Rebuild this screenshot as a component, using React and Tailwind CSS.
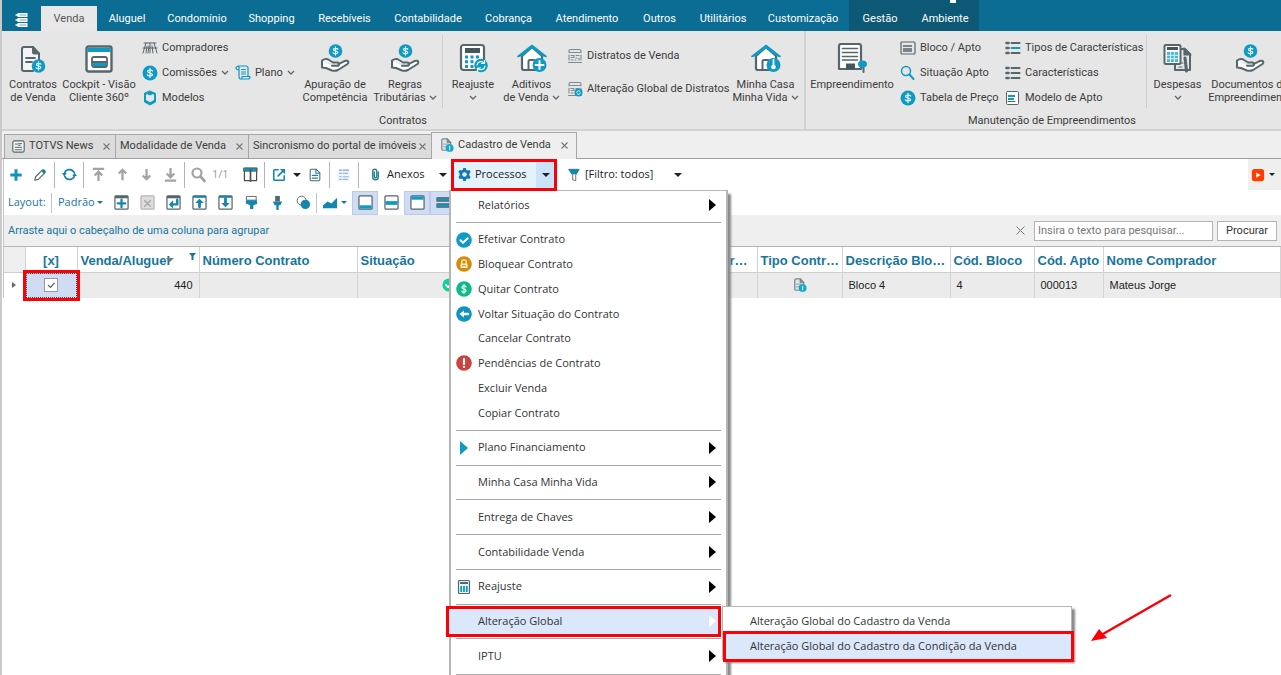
import { useState } from 'react'

const TEAL = '#0f9ac3'
const DARK = '#55666c'

function Svg({ size = 16, box = 16, children }) {
  return (
    <svg
      width={size}
      height={size}
      viewBox={`0 0 ${box} ${box}`}
      fill="none"
      strokeLinecap="round"
      strokeLinejoin="round"
      className="shrink-0"
      aria-hidden="true"
    >
      {children}
    </svg>
  )
}

// small "S" used inside every coin icon, drawn around a centre point
function Coin({ cx, cy, r }) {
  const k = r / 7
  return (
    <>
      <circle cx={cx} cy={cy} r={r} fill={TEAL} />
      <path
        transform={`translate(${cx} ${cy}) scale(${k})`}
        d="M2.4 -1.9C1.8 -2.9 -2.2 -3.2 -2.2 -1.3C-2.2 0.4 2.4 -0.4 2.4 1.5C2.4 3.2 -1.8 3.1 -2.5 1.8M0 -4.2V4.2"
        stroke="#e6f6fb"
        strokeWidth="1.2"
      />
    </>
  )
}

function ContractIcon() {
  return (
    <Svg size={28} box={28}>
      <path d="M20 15V8.500L14 2H5Q3 2 3 4v20q0 2 2 2H14" fill="#f4f4f4" stroke={DARK} strokeWidth="2" />
      <path d="M14 2v5q0 1.500 1.500 1.500H20" fill={DARK} stroke={DARK} strokeWidth="2" />
      <path d="M7 13h9M7 17h6" stroke={DARK} strokeWidth="1.800" />
      <Coin cx={19.5} cy={21} r={6.8} />
    </Svg>
  )
}

function CockpitIcon() {
  return (
    <Svg size={28} box={28}>
      <rect x="1.500" y="1.500" width="25" height="25" rx="2" fill="#fff" stroke={DARK} strokeWidth="2.400" />
      <path d="M2.500 3h23v4h-23z" fill={TEAL} />
      <rect x="7" y="12" width="15" height="10" rx="2" fill="#fff" stroke={DARK} strokeWidth="1.800" />
      <path d="M8 18h13v3H8z" fill={TEAL} />
      <path d="M7 17h15" stroke={DARK} strokeWidth="1.800" />
    </Svg>
  )
}

function HandCoinIcon() {
  return (
    <Svg size={30} box={30}>
      <Coin cx={15.5} cy={8} r={6.8} />
      <path
        d="M2 17.500v7l4 .5 6 2.500q3 .8 6-.5l9.500-6q2-2.300-.5-3.200-1.800-.3-4 1l-4.500 2.400M2 17.500q4-2.500 7-.5l4 2.500h4.500q2.500 1 1 3.200H12"
        fill="#fff"
        stroke={DARK}
        strokeWidth="2"
      />
    </Svg>
  )
}

function CalculatorIcon() {
  return (
    <Svg size={30} box={30}>
      <rect x="3" y="2" width="23" height="25" rx="2.500" fill="#fff" stroke={DARK} strokeWidth="2.200" />
      <rect x="7" y="5" width="15" height="5" fill="#45565c" />
      <path
        d="M7 12.500h3v3H7zM12.500 12.500h3v3h-3zM18 12.500h3v3h-3zM7 17.200h3v3H7zM12.500 17.200h3v3h-3zM7 22h3v3H7zM12.500 22h3v3h-3z"
        fill={TEAL}
      />
      <circle cx="23" cy="22.500" r="6.800" fill={TEAL} />
      <path d="M19 22a4 4 0 0 1 7-2M27 23a4 4 0 0 1-7 2.300M26.500 17.500V20.500h-3M19.500 28v-3h3" stroke="#fff" strokeWidth="1.200" />
    </Svg>
  )
}

function HouseIcon({ badge }) {
  return (
    <Svg size={30} box={30}>
      <path d="M5 13v12q0 2 2 2h18V13L15 4z" fill="#fff" stroke={DARK} strokeWidth="2.200" />
      <path d="M11.500 27v-8.500q0-1.500 1.500-1.500h4q1.500 0 1.500 1.500V27" stroke={DARK} strokeWidth="2" />
      <path d="M1 13.500L15 2.500l14 11-3-1-11-8-11 8z" fill={TEAL} stroke={TEAL} strokeWidth="1.600" />
      <circle cx="22.500" cy="22" r="7" fill={TEAL} />
      {badge === 'plus' && <path d="M22.500 18v8M18.500 22h8" stroke="#fff" strokeWidth="2" />}
      {badge === 'key' && (
        <>
          <circle cx="22.500" cy="24" r="2.300" fill="#fff" />
          <path d="M22.500 22v-5" stroke="#fff" strokeWidth="1.800" />
        </>
      )}
    </Svg>
  )
}

function BuildingIcon() {
  return (
    <Svg size={30} box={30}>
      <path d="M2 26V3q0-2 2-2h18q2 0 2 2v23z" fill="#fff" stroke={DARK} strokeWidth="2.200" />
      <path d="M5.500 5.500h15M5.500 9.500h15M5.500 13.500h15M5.500 17h15" stroke={DARK} strokeWidth="1.600" />
      <path d="M9 20.500h9v6H9z" fill="#45565c" />
      <path d="M26.500 23v6" stroke={DARK} strokeWidth="2" />
      <ellipse cx="25.500" cy="21" rx="4.500" ry="3.500" fill={TEAL} />
    </Svg>
  )
}

function ExpensesIcon() {
  return (
    <Svg size={30} box={30}>
      <path d="M12 6h10l5 5v16H12z" fill="#e6e6e6" stroke={DARK} strokeWidth="2" />
      <path d="M21 5v7h7zM16 20h4M16 24h3" fill={DARK} stroke={DARK} strokeWidth="1.200" />
      <path d="M22 15l1.500 13" stroke={DARK} strokeWidth="3" />
      <rect x="1.500" y="2" width="16" height="19" rx="1.500" fill="#fff" stroke={DARK} strokeWidth="2" />
      <path d="M4 4h11v3H4z" fill="#45565c" />
      <path d="M4 9h11v10H4z" fill="#4fb6d3" />
      <path d="M4 12.300h11M4 15.700h11M7.500 9v10M11.300 9v10" stroke="#d6f0f7" strokeWidth="1" />
    </Svg>
  )
}

function PeopleIcon() {
  return (
    <Svg>
      <path d="M2 3h12M4 3L1 13M5 6l-1 7M8 3v10M7 6L6 13M12 3l3 10M10 6l1 7M1 8h14" stroke={DARK} strokeWidth="1" />
    </Svg>
  )
}

function CoinIcon() {
  return (
    <Svg>
      <Coin cx={8} cy={8} r={7.5} />
    </Svg>
  )
}

function BoxIcon() {
  return (
    <Svg>
      <path d="M8 1l5.500 2.500v8.500L8 15l-5.500-3V3.500z" fill={TEAL} stroke={TEAL} />
      <path d="M5 4l3 1.500L11 4l1 1v5L8 12.200 4 10V5z" fill="#e6e6e6" />
    </Svg>
  )
}

function ScrollIcon() {
  return (
    <Svg>
      <path d="M4 5V2.500q0-1-1-1.500h8q2 0 2 2v8M1 2.500Q1 5 4 5V2.500Q3 .5 1 2.500zM4 5v6.500q0 2.500 2 2.500h7q2 0 2-2.500H7q0 2.500-1 2.500" stroke={TEAL} strokeWidth="1.200" />
      <path d="M6.500 4.500h4M6.500 7h4M6.500 9h4" stroke={TEAL} />
    </Svg>
  )
}

function DissolutionIcon({ badge }) {
  return (
    <Svg>
      <path d="M2 4.500V3q0-1.500 1.500-1.500h9Q14 1.500 14 3v1.500M2 7v5M14 7v5M1.500 14.500h13M2 4.500h2M12 4.500h2M5 4.500h6M4 7.500h3v2H4M9 7.500h3M9 10h1M12 10v2M4 12h2M8 12h1" stroke="#7d8a8f" strokeWidth="1.100" />
      {badge && (
        <>
          <circle cx="11.500" cy="11.500" r="4" fill={TEAL} />
          <path d="M9.800 11.500a1.800 1.800 0 0 1 3.200-1M13.300 11.800a1.800 1.800 0 0 1-3.200 1" stroke="#fff" strokeWidth=".8" />
        </>
      )}
    </Svg>
  )
}

function BlockIcon() {
  return (
    <Svg>
      <rect x="1" y="2" width="14" height="12" rx="1" stroke={DARK} strokeWidth="1.200" />
      <path d="M3 6h9M3 9h9M3 11h9" stroke={DARK} strokeWidth="1.500" strokeLinecap="butt" />
    </Svg>
  )
}

function SearchIcon({ color = TEAL, weight = 1.5 }) {
  return (
    <Svg>
      <circle cx="6" cy="6" r="4.500" stroke={color} strokeWidth={weight} />
      <path d="M9.500 9.500l4 4.500" stroke={color} strokeWidth={weight + 0.5} />
    </Svg>
  )
}

function ListIcon({ color = DARK }) {
  return (
    <Svg>
      <path d="M1.500 3h2M1.500 8h2M1.500 13h2" stroke={DARK} strokeWidth="2.600" />
      <path d="M6.500 3h8M6.500 13h8" stroke={DARK} strokeWidth="2" />
      <path d="M6.500 8h8" stroke={color} strokeWidth="2" />
    </Svg>
  )
}

function ModelIcon() {
  return (
    <Svg>
      <rect x="1.500" y="1.500" width="12" height="13" rx="1" fill="#fff" stroke={DARK} strokeWidth="1" />
      <path d="M3 6h7M3 9h6" stroke={TEAL} strokeWidth="1.800" strokeLinecap="butt" />
      <path d="M3 11.500h7" stroke={DARK} />
    </Svg>
  )
}

function ContractSmallIcon() {
  return (
    <Svg size={14}>
      <path d="M12 7V5L8.500 1H3.500Q2 1 2 2.500v10Q2 14 3.500 14H8" fill="#dfe3e4" stroke="#7b898e" strokeWidth="1.400" />
      <path d="M8 1v4.500H12.500zM4 7h4M4 10h3" fill="#7b898e" stroke="#7b898e" strokeWidth=".8" />
      <circle cx="11" cy="11.300" r="4.500" fill="#16a9cc" />
      <path d="M11 9.500v4" stroke="#d8f2f9" strokeWidth="1.200" />
    </Svg>
  )
}

function Chevron() {
  return (
    <svg width="8" height="6" viewBox="0 0 8 6" fill="none" className="shrink-0" aria-hidden="true">
      <path d="M1 1l3 3 3-3" stroke="#666" strokeWidth="1.300" />
    </svg>
  )
}

function Caret({ small, color = '#222' }) {
  return (
    <svg width={small ? 6 : 8} height={small ? 3 : 4} viewBox="0 0 8 4" className="shrink-0" aria-hidden="true">
      <path d="M0 0h8L4 4z" fill={color} />
    </svg>
  )
}

function BigButton({ icon, lines, width, arrow }) {
  return (
    <button className={`flex shrink-0 flex-col items-center whitespace-nowrap ${width}`}>
      <span className="flex h-[47px] items-end pb-[5px]">{icon}</span>
      <span className="leading-[13px]">{lines[0]}</span>
      <span className="flex h-[13px] items-center gap-[3px] leading-[13px]">
        {lines[1]}
        {arrow && <Chevron />}
      </span>
    </button>
  )
}

function SmallButton({ icon, label, arrow }) {
  return (
    <button className="flex h-4 items-center gap-1 whitespace-nowrap">
      {icon}
      {label}
      {arrow && <Chevron />}
    </button>
  )
}

function RibbonDivider() {
  return <div className="mt-1 h-[73px] w-px shrink-0 bg-[#cdcdcd]" />
}

function Ribbon() {
  return (
    <div className="flex h-[100px] overflow-hidden border-b-2 border-[#d2d2d2] bg-[#e6e6e6] text-[11px] text-[#3c3c3c]">
      <section className="flex w-[804px] shrink-0 flex-col border-r-2 border-[#d2d2d2]">
        <div className="flex h-[84px] pl-[3px]">
          <BigButton icon={<ContractIcon />} lines={['Contratos', 'de Venda']} width="w-[56px]" />
          <BigButton icon={<CockpitIcon />} lines={['Cockpit - Visão', 'Cliente 360º']} width="w-[76px]" />
          <div className="flex w-[165px] shrink-0 flex-col gap-[9px] pt-[9px] pl-[5px]">
            <SmallButton icon={<PeopleIcon />} label="Compradores" />
            <div className="flex gap-[6px]">
              <SmallButton icon={<CoinIcon />} label="Comissões" arrow />
              <SmallButton icon={<ScrollIcon />} label="Plano" arrow />
            </div>
            <SmallButton icon={<BoxIcon />} label="Modelos" />
          </div>
          <BigButton icon={<HandCoinIcon />} lines={['Apuração de', 'Competência']} width="w-[66px]" />
          <BigButton icon={<HandCoinIcon />} lines={['Regras', 'Tributárias']} width="w-[74px]" arrow />
          <RibbonDivider />
          <BigButton icon={<CalculatorIcon />} lines={['Reajuste', '']} width="w-[60px]" arrow />
          <BigButton icon={<HouseIcon badge="plus" />} lines={['Aditivos', 'de Venda']} width="w-[57px]" arrow />
          <div className="flex w-[167px] shrink-0 flex-col gap-[17px] pt-[17px] pl-[7px]">
            <SmallButton icon={<DissolutionIcon />} label="Distratos de Venda" />
            <SmallButton icon={<DissolutionIcon badge />} label="Alteração Global de Distratos" />
          </div>
          <BigButton icon={<HouseIcon badge="key" />} lines={['Minha Casa', 'Minha Vida']} width="w-[77px]" arrow />
        </div>
        <h2 className="text-center leading-4">Contratos</h2>
      </section>
      <section className="flex w-[492px] shrink-0 flex-col">
        <div className="flex h-[84px] pl-[3px]">
          <BigButton icon={<BuildingIcon />} lines={['Empreendimento', '']} width="w-[86px]" />
          <div className="flex w-[105px] shrink-0 flex-col gap-[9px] pt-[9px] pl-[5px]">
            <SmallButton icon={<BlockIcon />} label="Bloco / Apto" />
            <SmallButton icon={<SearchIcon />} label="Situação Apto" />
            <SmallButton icon={<CoinIcon />} label="Tabela de Preço" />
          </div>
          <div className="flex w-[146px] shrink-0 flex-col gap-[9px] pt-[9px] pl-[5px]">
            <SmallButton icon={<ListIcon color={TEAL} />} label="Tipos de Características" />
            <SmallButton icon={<ListIcon />} label="Características" />
            <SmallButton icon={<ModelIcon />} label="Modelo de Apto" />
          </div>
          <RibbonDivider />
          <BigButton icon={<ExpensesIcon />} lines={['Despesas', '']} width="w-[61px]" arrow />
          <BigButton icon={<HandCoinIcon />} lines={['Documentos do', 'Empreendimento']} width="w-[84px]" />
        </div>
        <h2 className="text-center leading-4">Manutenção de Empreendimentos</h2>
      </section>
    </div>
  )
}

const modules = [
  ['Aluguel', 'w-[60px]'],
  ['Condomínio', 'w-[80px]'],
  ['Shopping', 'w-[69px]'],
  ['Recebíveis', 'w-[77px]'],
  ['Contabilidade', 'w-[90px]'],
  ['Cobrança', 'w-[71px]'],
  ['Atendimento', 'w-[86px]'],
  ['Outros', 'w-[59px]'],
  ['Utilitários', 'w-[68px]'],
  ['Customização', 'w-[92px]'],
]

function Header() {
  return (
    <header className="flex h-[31px] items-end bg-[#0b6c94] text-[11px] text-white">
      <button className="flex h-[25px] w-[39px] items-center justify-center pt-[2px]" aria-label="Menu">
        <Svg size={16}>
          <path d="M3.500 1h10v4h-10zM3.500 6h10v4h-10zM3.500 11h10v4h-10z" fill="#fff" />
          <path d="M2 3h3M2 8h3M2 13h3" stroke="#fff" strokeWidth="1.400" />
          <path d="M6 3h6M6 8h6M6 13h6" stroke="#0b6c94" strokeWidth=".6" />
        </Svg>
      </button>
      <nav className="flex items-end">
        <a href="#venda" className="flex h-[25px] w-14 items-center justify-center bg-[#e8e8e8] pt-[2px] text-[#555]">Venda</a>
        {modules.map(([name, width]) => (
          <a key={name} href={`#${name}`} className={`flex h-[25px] items-center justify-center pt-[2px] ${width}`}>{name}</a>
        ))}
      </nav>
      <div className="relative flex h-[31px] items-end bg-[#0d5874]">
        <a href="#gestao" className="flex h-[25px] w-[62px] items-center justify-center pt-[2px]">Gestão</a>
        <a href="#ambiente" className="flex h-[25px] w-[68px] items-center justify-center pt-[2px]">Ambiente</a>
        <span className="absolute top-0 left-[101px] h-[3px] w-[6px] bg-white" />
      </div>
    </header>
  )
}

function DocTab({ icon, label, width, active }) {
  return (
    <div
      className={
        active
          ? `relative z-10 -mb-px flex h-[27px] items-center justify-between border border-b-0 border-[#a8a8a8] bg-[#efefef] px-2 pb-[2px] ${width}`
          : `flex h-[24px] items-center justify-between border border-r-0 border-b-0 border-[#a8a8a8] bg-[#dcdcdc] pr-[5px] pl-1 ${width}`
      }
    >
      <button className="flex items-center gap-1 whitespace-nowrap">
        {icon}
        {label}
      </button>
      <button aria-label={`Fechar ${label}`}>
        <svg width="7" height="7" viewBox="0 0 7 7" aria-hidden="true">
          <path d="M.5.5l6 6M6.500.5l-6 6" stroke="#777" strokeWidth="1.100" />
        </svg>
      </button>
    </div>
  )
}

function DocTabs() {
  return (
    <div className="flex h-[28px] items-end border-b border-[#a0a0a0] bg-[#efefef] pl-[2px] text-[11px] text-[#3c3c3c]">
      <DocTab
        width="w-[111px]"
        label="TOTVS News"
        icon={
          <span className="pl-[3px]">
            <Svg size={13}>
              <rect x="1" y="1" width="14" height="14" rx="2" fill="#f5f5f5" stroke={DARK} strokeWidth="1.400" />
              <path d="M4 5h3M8 4.500h4M8 6.500h2M4 9h8M4 12h8" stroke={DARK} strokeWidth="1.200" />
            </Svg>
          </span>
        }
      />
      <DocTab width="w-[133px]" label="Modalidade de Venda" />
      <DocTab width="w-[183px]" label="Sincronismo do portal de imóveis" />
      <DocTab width="w-[146px]" label="Cadastro de Venda" icon={<ContractSmallIcon />} active />
    </div>
  )
}

function Tool({ label, children }) {
  return (
    <button aria-label={label} className="flex h-6 w-6 shrink-0 items-center justify-center">
      {children}
    </button>
  )
}

function Sep() {
  return <div className="mx-[2px] h-[26px] w-px shrink-0 bg-[#b4b4b4]" />
}

const GRAY = '#a3a3a3'
const BLUE = '#1486ae'

function ArrowIcon({ d }) {
  return (
    <Svg size={15}>
      <path d={d} stroke={GRAY} strokeWidth="2.400" strokeLinecap="butt" strokeLinejoin="miter" />
    </Svg>
  )
}

function MainToolbar() {
  return (
    <div className="flex h-[31px] items-center text-[11px] text-[#222]">
      <Tool label="Incluir">
        <Svg size={14}><path d="M8 1.500v13M1.500 8h13" stroke="#1292c4" strokeWidth="3.400" strokeLinecap="butt" /></Svg>
      </Tool>
      <Tool label="Editar">
        <Svg size={14}>
          <path d="M2 14l1-4 7.500-7.500q1-1 2.500 0t.5 3L6 13z" stroke={DARK} strokeWidth="1.300" />
          <path d="M9.500 3.500l1.500-1.500h2l1.500 2-.5 1.500-1.500 1.500z" fill={BLUE} />
        </Svg>
      </Tool>
      <Sep />
      <Tool label="Atualizar">
        <Svg size={15}>
          <path d="M2.500 8a5.500 5.500 0 0 1 10.500-2M13.500 8A5.500 5.500 0 0 1 3 10" stroke={BLUE} strokeWidth="1.800" />
          <path d="M0 6.500h5L2.500 10zM11 9.500h5L13.500 6z" fill={BLUE} />
        </Svg>
      </Tool>
      <Sep />
      <Tool label="Primeiro"><ArrowIcon d="M2 2h12M8 15V5M4 9l4-4 4 4" /></Tool>
      <Tool label="Anterior"><ArrowIcon d="M8 14V3M4 7l4-4 4 4" /></Tool>
      <Tool label="Próximo"><ArrowIcon d="M8 2v11M4 9l4 4 4-4" /></Tool>
      <Tool label="Último"><ArrowIcon d="M2 14.500h12M8 1v10M4 7l4 4 4-4" /></Tool>
      <Sep />
      <Tool label="Localizar"><SearchIcon color={GRAY} weight={2.2} /></Tool>
      <span className="w-[27px] shrink-0 pl-px text-[11px] text-[#9a9a9a]">1/1</span>
      <Tool label="Colunas">
        <Svg size={15}>
          <path d="M1.500 1.500h13v13h-13z" fill="#fff" stroke="#4d4d4d" strokeWidth="1.300" />
          <path d="M1 1h14v3.500H1z" fill={TEAL} stroke="#4d4d4d" strokeWidth=".8" />
          <path d="M8 3v12" stroke="#4d4d4d" strokeWidth="1.800" />
        </Svg>
      </Tool>
      <Sep />
      <Tool label="Exportar">
        <Svg size={14}>
          <path d="M7 2H3Q2 2 2 3v10q0 1 1 1h10q1 0 1-1V9" stroke={BLUE} strokeWidth="1.800" />
          <path d="M7 9l6-6" stroke={BLUE} strokeWidth="1.800" />
          <path d="M9 1h6v6z" fill={BLUE} />
        </Svg>
      </Tool>
      <span className="px-[2px]"><Caret /></span>
      <Tool label="Relatório">
        <Svg size={14}>
          <path d="M13.500 5.500L9.500 1.500H3.500q-1 0-1 1v11q0 1 1 1h9q1 0 1-1z" fill="#fff" stroke={DARK} strokeWidth="1.200" />
          <path d="M9 1.500V6h4.500M5 8.500h6M5 11.500h6" stroke={BLUE} strokeWidth="1.300" />
        </Svg>
      </Tool>
      <Sep />
      <Tool label="Propriedades">
        <Svg size={14}>
          <path d="M1 1h14v14H1z" fill="#eef4fa" />
          <path d="M3 2.500h2M3 6h2M7 2.500h6M7 6h5" stroke="#7fa9d3" strokeWidth="1.400" />
          <path d="M3 10h2M3 13h2M7 10h6M7 13h5" stroke="#9db8cc" strokeWidth="1.300" />
        </Svg>
      </Tool>
      <Sep />
      <button className="flex h-6 w-[86px] shrink-0 items-center gap-[5px] pl-[8px]">
        <Svg size={13}>
          <path d="M11.500 5v6q0 3.500-3.500 3.500T4.500 11V4Q4.500 1.500 7 1.500T9.500 4v6.500q0 1.500-1.500 1.500T6.500 10.500V5" stroke="#2b8590" strokeWidth="1.700" />
        </Svg>
        <span className="flex-1 text-left">Anexos</span>
        <Caret />
      </button>

      <div className="relative ml-[5px] flex h-[30px] w-[104px] shrink-0">
        <button className="flex flex-1 items-center gap-1 bg-[#e4f2fc] pl-[6px]">
          <Svg size={13}>
            <path d="M6.500 0h3l.5 2.200 1.800 1 2.200-.8L15.500 5l-1.500 1.700v2.600l1.500 1.700-1.500 2.600-2.200-.7-1.800 1L9.500 16h-3L6 13.900l-1.800-1-2.200.7L.5 11 2 9.300V6.700L.5 5 2 2.400l2.200.8 1.800-1z" fill="#1279b3" />
            <circle cx="8" cy="8" r="2.800" fill="#e4f2fc" />
          </Svg>
          Processos
        </button>
        <button className="flex w-[20px] items-center justify-center bg-[#c9e4f8]" aria-label="Abrir processos"><Caret /></button>
        <ProcessMenu />
        <span className="pointer-events-none absolute -inset-px z-30 border-3 border-[#fb0007]" />
      </div>

      <button className="ml-2 flex h-6 w-[118px] shrink-0 items-center gap-1 pl-[3px]">
        <Svg size={14}>
          <path d="M2.500 1.500h11L10 7.500v7l-3.500-1v-6z" fill="#fff" stroke={DARK} strokeWidth="1" />
          <path d="M1.500 1.500h13L11 7H5z" fill={BLUE} />
        </Svg>
        <span className="flex-1 text-left">[Filtro: todos]</span>
        <Caret />
      </button>
      <button className="ml-auto flex h-[31px] w-[33px] items-center gap-1 bg-[#efefef] pl-[3px]" aria-label="Vídeos">
        <Svg size={14}>
          <rect x="1" y="1" width="14" height="14" rx="3" fill="#ff3d00" />
          <path d="M6 5l5 3-5 3z" fill="#fff" />
        </Svg>
        <Caret small />
      </button>
    </div>
  )
}

function LayoutTool({ label, on, disabled, children }) {
  return (
    <button
      aria-label={label}
      disabled={disabled}
      className={`flex h-6 w-[26px] shrink-0 items-center justify-center ${on ? 'bg-[#cfdcf4] outline -outline-offset-1 outline-[#bccbe8]' : ''}`}
    >
      <Svg size={15}>{children}</Svg>
    </button>
  )
}

function Frame({ color = DARK, fill = '#fff' }) {
  return <rect x="1" y="1" width="14" height="14" rx="1" fill={fill} stroke={color} strokeWidth="1.300" />
}

function LayoutToolbar() {
  return (
    <div className="flex h-[25px] items-center pl-1 text-[11px] text-[#17759c]">
      <span className="w-[43px] shrink-0">Layout:</span>
      <div className="h-5 w-px shrink-0 bg-[#c4c4c4]" />
      <button className="flex h-6 w-[56px] shrink-0 items-center gap-[2px] pl-[6px]">
        Padrão
        <Caret small color="#17759c" />
      </button>
      <LayoutTool label="Novo layout">
        <Frame />
        <path d="M1 1h14v2.500H1z" fill={DARK} />
        <path d="M8 5v8M4 9h8" stroke={BLUE} strokeWidth="2.400" />
      </LayoutTool>
      <LayoutTool label="Excluir layout" disabled>
        <Frame color="#b5b5b5" fill="#ddd" />
        <path d="M5 6l6 6M11 6l-6 6" stroke="#aaa" strokeWidth="1.600" />
      </LayoutTool>
      <LayoutTool label="Restaurar">
        <Frame />
        <path d="M1 1h14v2.500H1z" fill={DARK} />
        <path d="M12 5v5H6" stroke={BLUE} strokeWidth="2.600" />
        <path d="M7.500 5.500v9L3 10z" fill={BLUE} />
      </LayoutTool>
      <LayoutTool label="Exportar layout">
        <Frame />
        <path d="M1 1h14v2H1z" fill={BLUE} />
        <path d="M8 12.500V7" stroke={BLUE} strokeWidth="3" />
        <path d="M3.500 8.500h9L8 4z" fill={BLUE} />
      </LayoutTool>
      <LayoutTool label="Importar layout">
        <Frame />
        <path d="M1 1h14v2H1z" fill={BLUE} />
        <path d="M8 4v5" stroke={BLUE} strokeWidth="3" />
        <path d="M3.500 8.500h9L8 13z" fill={BLUE} />
      </LayoutTool>
      <LayoutTool label="Pintar">
        <path d="M3 1.500h10v4H3z" fill="#fff" stroke={DARK} />
        <path d="M2 5.500h12v4L10 11v4H6.500v-4L2 9z" fill={BLUE} />
      </LayoutTool>
      <LayoutTool label="Fixar">
        <path d="M5.500 1h5v6h-5z" fill={DARK} />
        <path d="M3 7h10l-2 4H5z" fill={BLUE} />
        <path d="M8 10v5" stroke={BLUE} strokeWidth="2.500" />
      </LayoutTool>
      <LayoutTool label="Formatação condicional">
        <circle cx="6" cy="6" r="4.800" fill="#fff" stroke={DARK} />
        <circle cx="10" cy="10" r="5" fill={BLUE} />
      </LayoutTool>
      <div className="h-5 w-px shrink-0 bg-[#c4c4c4]" />
      <button aria-label="Gráfico" className="flex h-6 w-[35px] shrink-0 items-center gap-[3px] pl-[6px]">
        <Svg size={15}><path d="M0 14V11l5-4 4 2 6-6v11z" fill={BLUE} /></Svg>
        <Caret small color="#17759c" />
      </button>
      <LayoutTool label="Rodapé" on>
        <Frame />
        <path d="M1.500 11h13v3.500h-13z" fill={TEAL} />
      </LayoutTool>
      <LayoutTool label="Rodapé de grupo">
        <Frame />
        <path d="M1.500 6.500h13v4h-13z" fill={TEAL} />
      </LayoutTool>
      <LayoutTool label="Agrupamento" on>
        <Frame />
        <path d="M1.500 1.500h13v3.500h-13z" fill={TEAL} />
      </LayoutTool>
      <LayoutTool label="Busca" on>
        <path d="M1 3h14v3.500H1zM1 9.500h14V13H1z" fill={TEAL} stroke={DARK} strokeWidth="1.200" />
      </LayoutTool>
    </div>
  )
}

function Disc({ color, children }) {
  return (
    <Svg size={16}>
      <circle cx="8" cy="8" r="7.800" fill={color} />
      {children}
    </Svg>
  )
}

const menuItems = [
  { label: 'Relatórios', sub: true },
  null,
  {
    label: 'Efetivar Contrato',
    icon: <Disc color={TEAL}><path d="M4.500 8.200l2.500 2.500 4.700-4.500" stroke="#fff" strokeWidth="2" /></Disc>,
  },
  {
    label: 'Bloquear Contrato',
    icon: (
      <Disc color="#d38b0c">
        <path d="M4.500 7.500h7v4.500h-7z" fill="#fdeec8" />
        <path d="M5.800 7.500V5.500q0-1.700 2.200-1.700t2.200 1.700v2" stroke="#fdeec8" strokeWidth="1.300" />
        <path d="M6.500 9.700h3" stroke="#d38b0c" />
      </Disc>
    ),
  },
  {
    label: 'Quitar Contrato',
    icon: (
      <Disc color="#10b98a">
        <path d="M10 6Q9.500 4.700 8 4.700T6 6.300Q6 7.700 8 8t2 1.700-2 1.700T6 10M8 3.500v9" stroke="#e6fff6" strokeWidth="1.200" />
      </Disc>
    ),
  },
  {
    label: 'Voltar Situação do Contrato',
    icon: (
      <Disc color="#1094bf">
        <path d="M6 8h6" stroke="#fff" strokeWidth="2.400" />
        <path d="M3.500 8L8 4.500v7z" fill="#fff" />
      </Disc>
    ),
  },
  { label: 'Cancelar Contrato' },
  {
    label: 'Pendências de Contrato',
    icon: <Disc color="#c9433f"><path d="M8 4v5M8 11.800v.2" stroke="#fff" strokeWidth="2.200" /></Disc>,
  },
  { label: 'Excluir Venda' },
  { label: 'Copiar Contrato' },
  null,
  { label: 'Plano Financiamento', sub: true, icon: <Svg size={16}><path d="M4 1l8 7-8 7z" fill={TEAL} /></Svg> },
  null,
  { label: 'Minha Casa Minha Vida', sub: true },
  null,
  { label: 'Entrega de Chaves', sub: true },
  null,
  { label: 'Contabilidade Venda', sub: true },
  null,
  {
    label: 'Reajuste',
    sub: true,
    icon: (
      <Svg size={16}>
        <rect x="2.500" y="1.500" width="11" height="13" rx="1" fill="#e9f4f8" stroke={DARK} strokeWidth="1.200" />
        <path d="M4 3h8v2H4z" fill={DARK} />
        <path d="M5.200 7v6M8 7v6M10.800 7v6" stroke={TEAL} strokeWidth="1.800" strokeLinecap="butt" />
      </Svg>
    ),
  },
  null,
  { label: 'Alteração Global', sub: true, open: true },
  null,
  { label: 'IPTU', sub: true },
  null,
]

function ProcessMenu() {
  return (
    <ul className="absolute top-full -left-[3px] z-20 flex h-[485px] w-[279px] flex-col border-x-2 border-t border-[#b5b5b5] bg-white pt-[2px] text-[#333] shadow-[3px_4px_2px_#8a8a8a]">
      {menuItems.map((item, i) =>
        item === null ? (
          <li key={i} className="flex h-[10px] shrink-0 items-center px-[5px] last:h-[6px] last:items-end">
            <hr className="w-full border-t-1 border-[#a9a9a9]" />
          </li>
        ) : (
          <li key={i} className="relative flex flex-1">
            <button
              className={
                item.open
                  ? '-ml-[2px] mr-2 flex flex-1 items-center bg-[#dbe7fb] pr-[2px] pl-[7px] outline-3 outline-[#fb0007]'
                  : 'flex flex-1 items-center pr-[10px] pl-[5px]'
              }
            >
              <span className="flex w-[22px] shrink-0 items-center">{item.icon}</span>
              <span className="flex-1 text-left">{item.label}</span>
              {item.sub && (
                <svg width="7" height="12" viewBox="0 0 7 12" className="shrink-0" aria-hidden="true">
                  <path d="M0 0v12l7-6z" fill={item.open ? '#fff' : '#000'} />
                </svg>
              )}
            </button>
            {item.open && <SubMenu />}
          </li>
        ),
      )}
    </ul>
  )
}

function SubMenu() {
  return (
    <div className="absolute -top-[3px] left-[271px]">
      <ul className="w-[350px] border border-[#b5b5b5] bg-white pt-[2px] whitespace-nowrap shadow-[3px_3px_2px_#8a8a8a]">
        <li>
          <button className="h-[25px] pl-[27px]">Alteração Global do Cadastro da Venda</button>
        </li>
        <li className="ml-[3px] bg-[#dbe7fb] outline-3 outline-[#fb0007]">
          <button className="h-[25px] pl-[24px]">Alteração Global do Cadastro da Condição da Venda</button>
        </li>
      </ul>
      <svg width="84" height="50" viewBox="0 0 84 50" className="absolute -top-[14px] left-[369px]" aria-hidden="true">
        <path d="M80 3L12 42" stroke="#fb0007" strokeWidth="2.500" />
        <path d="M0 49l8-12 8 9z" fill="#fb0007" />
      </svg>
    </div>
  )
}

function GroupPanel() {
  return (
    <div className="flex h-8 items-center border-b border-[#b4b4b4] bg-[#efefef] pr-1 pl-1 font-[Roboto,sans-serif] text-[11px]">
      <span className="pt-[2px] text-[#17759c]">Arraste aqui o cabeçalho de uma coluna para agrupar</span>
      <button className="mr-[9px] ml-auto" aria-label="Limpar pesquisa">
        <svg width="9" height="9" viewBox="0 0 9 9" aria-hidden="true">
          <path d="M.5.5l8 8M8.500.5l-8 8" stroke="#777" />
        </svg>
      </button>
      <input
        type="text"
        aria-label="Pesquisar"
        placeholder="Insira o texto para pesquisar..."
        className="mr-1 h-5 w-[179px] border border-[#b4b4b4] bg-white px-[3px] placeholder:text-[#777]"
      />
      <button className="h-5 w-[60px] border border-[#b4b4b4] bg-white pt-px text-[#333]">Procurar</button>
    </div>
  )
}

function DataGrid() {
  const [checked, setChecked] = useState(true)

  return (
    <table className="w-full table-fixed border-collapse">
      <colgroup>
        <col className="w-[21px]" />
        <col className="w-[52px]" />
        <col className="w-[122px]" />
        <col className="w-[158px]" />
        <col className="w-[184px]" />
        <col className="w-[216px]" />
        <col className="w-[85px]" />
        <col className="w-[108px]" />
        <col className="w-[84px]" />
        <col className="w-[69px]" />
        <col />
      </colgroup>
      <thead>
        <tr className="h-[25px] border-b border-[#cfcfcf] text-left font-[Liberation_Sans,sans-serif] text-[13px] whitespace-nowrap text-[#17759c] *:border-r *:border-[#d4d4d4] *:px-[3px] *:pt-[2px]">
          <th className="bg-[#efefef]"></th>
          <th className="text-center">[x]</th>
          <th>
            <span className="flex items-center">
              Venda/Aluguel
              <span className="-ml-1"><Caret color="#777" /></span>
              <svg width="7" height="7" viewBox="0 0 7 7" className="mb-2 ml-auto" aria-hidden="true">
                <path d="M0 0h7L4.500 3v4h-2V3z" fill="#17759c" />
              </svg>
            </span>
          </th>
          <th>Número Contrato</th>
          <th>Situação</th>
          <th><span className="block pr-[6px] text-right">er…</span></th>
          <th>Tipo Contr…</th>
          <th>Descrição Blo…</th>
          <th>Cód. Bloco</th>
          <th>Cód. Apto</th>
          <th>Nome Comprador</th>
        </tr>
      </thead>
      <tbody>
        <tr className="h-[26px] bg-[#ebebeb] font-[Liberation_Sans,sans-serif] text-[11px] text-[#222] *:border-r *:border-[#d4d4d4] *:px-[6px]">
          <td className="bg-white">
            <svg width="4" height="6" viewBox="0 0 4 6" className="ml-[2px]" aria-hidden="true">
              <path d="M0 0v6l4-3z" fill="#666" />
            </svg>
          </td>
          <td className="relative bg-[#cfdcf4]">
            <span className="pointer-events-none absolute inset-0 border border-dotted border-[#444]" />
            <span className="pointer-events-none absolute -inset-[3px] border-3 border-[#fb0007]" />
            <span className="relative mx-auto flex h-[14px] w-[14px]">
              <input
                type="checkbox"
                aria-label="Selecionar contrato 440"
                checked={checked}
                onChange={(e) => setChecked(e.target.checked)}
                className="h-[14px] w-[14px] appearance-none border border-[#999] bg-white"
              />
              {checked && (
                <svg width="14" height="14" viewBox="0 0 14 14" fill="none" className="pointer-events-none absolute inset-0" aria-hidden="true">
                  <path d="M4 7l2.500 2.500L10.500 5" stroke="#666" strokeWidth="1.200" />
                </svg>
              )}
            </span>
          </td>
          <td className="text-right">440</td>
          <td></td>
          <td>
            <span className="flex justify-center">
              <Svg size={14}>
                <circle cx="8" cy="8" r="7.500" fill="#14cf9c" />
                <path d="M4.500 8l2.500 2.500 4.500-4.500" stroke="#fff" strokeWidth="2" />
              </Svg>
            </span>
          </td>
          <td></td>
          <td><span className="flex justify-center"><ContractSmallIcon /></span></td>
          <td>Bloco 4</td>
          <td>4</td>
          <td>000013</td>
          <td>Mateus Jorge</td>
        </tr>
      </tbody>
    </table>
  )
}

export default function App() {
  return (
    <div className="min-h-screen overflow-hidden border-l-2 border-[#c9c9c9] bg-white font-[Open_Sans,sans-serif]">
      <div className="font-[Roboto,sans-serif]">
        <Header />
        <Ribbon />
        <DocTabs />
      </div>
      <main className="ml-px border-l border-[#c4c4c4]">
        <MainToolbar />
        <LayoutToolbar />
        <GroupPanel />
        <DataGrid />
      </main>
    </div>
  )
}
